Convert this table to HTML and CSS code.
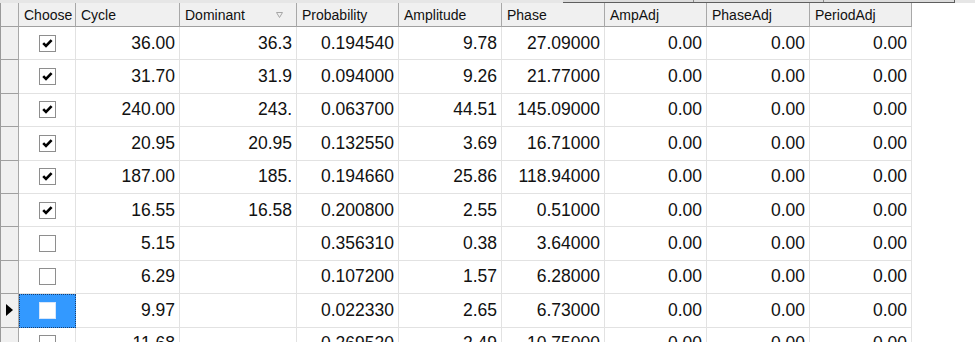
FILE: index.html
```html
<!DOCTYPE html>
<html>
<head>
<meta charset="utf-8">
<link rel="stylesheet" href="styles.css">
</head>
<body>
<div class="topstrip">
  <div class="tabs"><span class="tab"></span><span class="tab"></span><span class="tab"></span></div>
</div>
<div class="grid">
  <div class="hc corner"></div>
  <div class="hc">Choose</div>
  <div class="hc">Cycle</div>
  <div class="hc sort">Dominant<svg class="sortglyph" width="7" height="6" viewBox="0 0 7 6"><path d="M0.5 0.5 H6.5 L3.5 5.5 Z" fill="none" stroke="#a6a6a6" stroke-width="1"/></svg></div>
  <div class="hc">Probability</div>
  <div class="hc">Amplitude</div>
  <div class="hc">Phase</div>
  <div class="hc">AmpAdj</div>
  <div class="hc">PhaseAdj</div>
  <div class="hc">PeriodAdj</div>
  <div class="hfill"></div>

  <div class="rh"></div>
  <div class="cc"><span class="cb"><svg class="tick" width="15" height="15" viewBox="0 0 15 15"><path d="M3.2 7.2 L6 10 L11.6 4.2" fill="none" stroke="#000" stroke-width="2.6"/></svg></span></div>
  <div class="c">36.00</div><div class="c">36.3</div><div class="c">0.194540</div><div class="c">9.78</div><div class="c">27.09000</div><div class="c">0.00</div><div class="c">0.00</div><div class="c">0.00</div><div class="fill"></div>

  <div class="rh"></div>
  <div class="cc"><span class="cb"><svg class="tick" width="15" height="15" viewBox="0 0 15 15"><path d="M3.2 7.2 L6 10 L11.6 4.2" fill="none" stroke="#000" stroke-width="2.6"/></svg></span></div>
  <div class="c">31.70</div><div class="c">31.9</div><div class="c">0.094000</div><div class="c">9.26</div><div class="c">21.77000</div><div class="c">0.00</div><div class="c">0.00</div><div class="c">0.00</div><div class="fill"></div>

  <div class="rh"></div>
  <div class="cc"><span class="cb"><svg class="tick" width="15" height="15" viewBox="0 0 15 15"><path d="M3.2 7.2 L6 10 L11.6 4.2" fill="none" stroke="#000" stroke-width="2.6"/></svg></span></div>
  <div class="c">240.00</div><div class="c">243.</div><div class="c">0.063700</div><div class="c">44.51</div><div class="c">145.09000</div><div class="c">0.00</div><div class="c">0.00</div><div class="c">0.00</div><div class="fill"></div>

  <div class="rh"></div>
  <div class="cc"><span class="cb"><svg class="tick" width="15" height="15" viewBox="0 0 15 15"><path d="M3.2 7.2 L6 10 L11.6 4.2" fill="none" stroke="#000" stroke-width="2.6"/></svg></span></div>
  <div class="c">20.95</div><div class="c">20.95</div><div class="c">0.132550</div><div class="c">3.69</div><div class="c">16.71000</div><div class="c">0.00</div><div class="c">0.00</div><div class="c">0.00</div><div class="fill"></div>

  <div class="rh"></div>
  <div class="cc"><span class="cb"><svg class="tick" width="15" height="15" viewBox="0 0 15 15"><path d="M3.2 7.2 L6 10 L11.6 4.2" fill="none" stroke="#000" stroke-width="2.6"/></svg></span></div>
  <div class="c">187.00</div><div class="c">185.</div><div class="c">0.194660</div><div class="c">25.86</div><div class="c">118.94000</div><div class="c">0.00</div><div class="c">0.00</div><div class="c">0.00</div><div class="fill"></div>

  <div class="rh"></div>
  <div class="cc"><span class="cb"><svg class="tick" width="15" height="15" viewBox="0 0 15 15"><path d="M3.2 7.2 L6 10 L11.6 4.2" fill="none" stroke="#000" stroke-width="2.6"/></svg></span></div>
  <div class="c">16.55</div><div class="c">16.58</div><div class="c">0.200800</div><div class="c">2.55</div><div class="c">0.51000</div><div class="c">0.00</div><div class="c">0.00</div><div class="c">0.00</div><div class="fill"></div>

  <div class="rh"></div>
  <div class="cc"><span class="cb"></span></div>
  <div class="c">5.15</div><div class="c"></div><div class="c">0.356310</div><div class="c">0.38</div><div class="c">3.64000</div><div class="c">0.00</div><div class="c">0.00</div><div class="c">0.00</div><div class="fill"></div>

  <div class="rh"></div>
  <div class="cc"><span class="cb"></span></div>
  <div class="c">6.29</div><div class="c"></div><div class="c">0.107200</div><div class="c">1.57</div><div class="c">6.28000</div><div class="c">0.00</div><div class="c">0.00</div><div class="c">0.00</div><div class="fill"></div>

  <div class="rh current"><svg width="7" height="12" viewBox="0 0 7 12"><path d="M0 0 L7 6 L0 12 Z" fill="#000"/></svg></div>
  <div class="cc selected"><span class="cb sel"></span></div>
  <div class="c">9.97</div><div class="c"></div><div class="c">0.022330</div><div class="c">2.65</div><div class="c">6.73000</div><div class="c">0.00</div><div class="c">0.00</div><div class="c">0.00</div><div class="fill"></div>

  <div class="rh"></div>
  <div class="cc"><span class="cb"></span></div>
  <div class="c">11.68</div><div class="c"></div><div class="c">0.269520</div><div class="c">2.49</div><div class="c">10.75000</div><div class="c">0.00</div><div class="c">0.00</div><div class="c">0.00</div><div class="fill"></div>
</div>
</body>
</html>
```

FILE: styles.css
```css
html, body {
  margin: 0;
  padding: 0;
  background: #ffffff;
  overflow: hidden;
  width: 975px;
  height: 342px;
}

.topstrip {
  height: 3px;
  background: #e6e6e6;
  display: flex;
}

.tabs {
  margin-left: 563px;
  width: 392px;
  height: 3px;
  display: flex;
  box-sizing: border-box;
  border-bottom: 1px solid #5e5e5e;
  border-right: 1px solid #5e5e5e;
  background: #dcdcdc;
}

.tab {
  flex: 1;
  border-right: 1px solid #8a8a8a;
}

.tab:last-child {
  border-right: none;
}

.grid {
  display: grid;
  grid-template-columns: 19px 57px 104px 117px 102px 103px 103px 102px 103px 102px 1fr;
  grid-template-rows: 24px repeat(10, 33.4px);
  font-family: "Liberation Sans", Arial, sans-serif;
  color: #111111;
}

.hc {
  box-sizing: border-box;
  background: #f0f0f0;
  border-right: 1px solid #a8a8a8;
  border-bottom: 1px solid #a0a0a0;
  font-size: 14px;
  padding-left: 5px;
  display: flex;
  align-items: center;
  white-space: nowrap;
  overflow: hidden;
}

.hc.corner {
  border-left: 1px solid #9a9a9a;
  padding-left: 0;
}

.hc.sort {
  justify-content: space-between;
  padding-right: 13px;
}

.sortglyph {
  flex: none;
}

.hfill {
  background: #ffffff;
}

.rh {
  box-sizing: border-box;
  background: #f0f0f0;
  border-left: 1px solid #9a9a9a;
  border-right: 1px solid #a8a8a8;
  border-bottom: 1px solid #a0a0a0;
  display: flex;
  align-items: center;
  padding-left: 5px;
}

.c, .cc {
  box-sizing: border-box;
  border-right: 1px solid #e2e2e2;
  border-bottom: 1px solid #e2e2e2;
  background: #ffffff;
}

.c {
  font-size: 17.5px;
  display: flex;
  align-items: center;
  justify-content: flex-end;
  padding-right: 4px;
  white-space: nowrap;
}

.cc {
  display: flex;
  align-items: center;
  justify-content: center;
}

.cc.selected {
  background: #3399ff;
  border: 1px dotted #1b3f6e;
}

.cb {
  box-sizing: border-box;
  width: 17px;
  height: 17px;
  border: 1px solid #8e8e8e;
  background: #ffffff;
  display: flex;
}

.tick {
  display: block;
}

.cb.sel {
  border-color: #d6e6fb;
}

.fill {
  background: #ffffff;
}
```
